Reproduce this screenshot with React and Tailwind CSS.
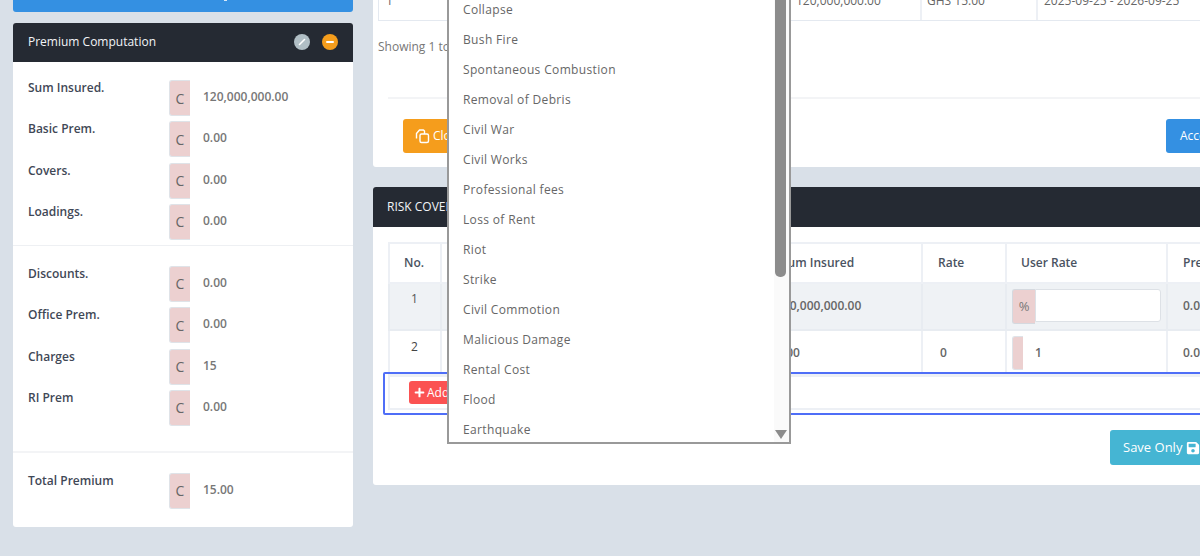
import React from "react";
import { FaPlus, FaSave } from "react-icons/fa";

const topRows = [
  { label: "Sum Insured.", value: "120,000,000.00" },
  { label: "Basic Prem.", value: "0.00" },
  { label: "Covers.", value: "0.00" },
  { label: "Loadings.", value: "0.00" },
];

const midRows = [
  { label: "Discounts.", value: "0.00" },
  { label: "Office Prem.", value: "0.00" },
  { label: "Charges", value: "15" },
  { label: "RI Prem", value: "0.00" },
];

const perils = [
  "Collapse",
  "Bush Fire",
  "Spontaneous Combustion",
  "Removal of Debris",
  "Civil War",
  "Civil Works",
  "Professional fees",
  "Loss of Rent",
  "Riot",
  "Strike",
  "Civil Commotion",
  "Malicious Damage",
  "Rental Cost",
  "Flood",
  "Earthquake",
];

const PremRow = ({ label, value }) => (
  <div className="flex h-[36px] mb-[5.33px] last:mb-0">
    <div className="w-[156px] pl-[15px] font-semibold text-[#3f4856] leading-4">{label}</div>
    <div className="w-[21px] h-[36px] bg-[#ecd0d0] border border-r-0 border-[#dfe3e8] rounded-l-[3px] flex items-center justify-center text-[#666] text-[14px]">
      C
    </div>
    <div className="pl-[13px] pt-[9px] leading-4 font-semibold text-[#777]">{value}</div>
  </div>
);

const CloneIcon = () => (
  <svg width="15" height="15" viewBox="0 0 15 15" fill="none" stroke="#fff" strokeWidth="1.4" strokeLinejoin="round">
    <path d="M1.5 9.5V4.5L4.5 1H8.5L9.5 2V5" />
    <rect x="5" y="5" width="8.5" height="8.5" rx="1.5" />
  </svg>
);

const Dropdown = () => (
  <div className="absolute left-[447px] top-[-5px] w-[344px] h-[449px] bg-white border-x-2 border-b-2 border-[#999] overflow-hidden">
    {perils.map((p) => (
      <div key={p} className="h-[30px] pl-[14px] flex items-center text-[#666] tracking-[0.35px]">
        {p}
      </div>
    ))}
    {/* scrollbar */}
    <div className="absolute right-0 top-0 bottom-0 w-[15px] bg-[#fafafa]">
      <div className="ml-[1px] w-[11px] h-[282px] bg-[#8c8c8c] rounded-b-[5px]" />
      <svg className="absolute left-[1px] bottom-[3px]" width="12" height="9" viewBox="0 0 12 9">
        <path d="M0 0H12L6 9Z" fill="#8c8c8c" />
      </svg>
    </div>
  </div>
);

const App = () => {
  return (
    <div
      className="relative w-[1200px] h-[556px] overflow-hidden bg-[#d9e0e8] flex items-start text-[12px]"
      style={{ fontFamily: '"Open Sans", "Noto Sans", sans-serif' }}
    >
      {/* left column */}
      <div className="ml-[13px] w-[340px] shrink-0">
        <div className="-mt-[28px] h-[40px] bg-[#3490e2] rounded-[3px] flex justify-center items-end">
          {/* descender of the cut off button label */}
          <span className="ml-[84px] mb-[11px] w-[3px] h-px bg-white/80" />
        </div>
        <div className="mt-[11px] bg-white rounded-[3px] h-[504px]">
          <div className="h-[39px] bg-[#252a33] rounded-t-[3px] flex items-center px-[15px] pb-px text-[#f2f4f7]">
            <span className="flex-1">Premium Computation</span>
            <span className="w-[16px] h-[16px] rounded-full bg-[#b0bec5] flex items-center justify-center mr-[12px]">
              <svg width="10" height="10" viewBox="0 0 10 10">
                <path d="M2.5 7.5L7.5 2.5" stroke="#fff" strokeWidth="1.6" strokeLinecap="round" />
              </svg>
            </span>
            <span className="w-[16px] h-[16px] rounded-full bg-[#f59d1c] flex items-center justify-center">
              <span className="w-[8px] h-[2px] bg-white rounded-full" />
            </span>
          </div>
          <div className="pt-[18px] pb-[5px] border-b border-[#eef0f3]">
            {topRows.map((r) => <PremRow key={r.label} {...r} />)}
          </div>
          <div className="pt-[20px] pb-[25px] border-b-2 border-[#f3f4f6]">
            {midRows.map((r) => <PremRow key={r.label} {...r} />)}
          </div>
          <div className="pt-[20px]">
            <PremRow label="Total Premium" value="15.00" />
          </div>
        </div>
      </div>

      {/* right column */}
      <div className="ml-[20px] w-[1000px] shrink-0">
        <div className="-mt-[40px] h-[207px] bg-white rounded-b-[3px] flex flex-col">
          <div className="ml-[5px] mt-[20px] h-[41px] border-x border-b border-[#e4e9f0] flex text-[#666]">
            <div className="w-[417px] pl-[7px] pt-[12px]">1</div>
            <div className="w-[126px] pt-[12px] border-r-2 border-[#edf0f5]">120,000,000.00</div>
            <div className="w-[116px] pl-[5px] pt-[12px] border-r-2 border-[#edf0f5]">GHS 15.00</div>
            <div className="pl-[6px] pt-[12px]">2025-09-25 - 2026-09-25</div>
          </div>
          <div className="ml-[5px] mt-[17px] text-[#777] leading-[18px]">Showing 1 to 1 of 1 entries</div>
          <div className="ml-[15px] mt-[41px] border-t-2 border-[#f3f4f6]" />
          <div className="mt-[20px] ml-[30px] flex">
            <button className="h-[34px] px-[12px] bg-[#f59d1c] rounded-[3px] text-white flex items-center gap-[3px]">
              <CloneIcon /> Clone
            </button>
            <button className="ml-auto h-[34px] w-[207px] px-[14px] bg-[#3490e2] rounded-[3px] text-white text-left">
              Accept
            </button>
          </div>
        </div>

        <div className="mt-[20px] h-[298px] bg-white rounded-[3px]">
          <div className="h-[40px] bg-[#252a33] rounded-t-[3px] flex items-center pl-[14px] text-[#f2f4f7]">
            RISK COVERS
          </div>
          <div className="relative pt-[15px]">
            <table className="ml-[15px] w-[900px] table-fixed border-collapse">
              <colgroup>
                <col className="w-[52px]" />
                <col className="w-[314px]" />
                <col className="w-[167px]" />
                <col className="w-[84px]" />
                <col className="w-[161px]" />
                <col />
              </colgroup>
              <thead>
                <tr className="h-[40px] text-[#4a5361] font-semibold">
                  <th className="border-2 border-[#edf0f5] text-left font-semibold pl-[14px]">No.</th>
                  <th className="border-2 border-[#edf0f5]" />
                  <th className="border-2 border-[#edf0f5] text-left font-semibold pl-[25px]">Sum Insured</th>
                  <th className="border-2 border-[#edf0f5] text-left font-semibold pl-[15px]">Rate</th>
                  <th className="border-2 border-[#edf0f5] text-left font-semibold pl-[14px]">User Rate</th>
                  <th className="border-2 border-[#edf0f5] text-left font-semibold pl-[15px]">Premium</th>
                </tr>
              </thead>
              <tbody>
                <tr className="h-[47px] bg-[#eff2f5] text-[#666]">
                  <td className="border-2 border-[#e8ecf1] align-top pt-[6px] pl-[21px] text-[#555]">1</td>
                  <td className="border-2 border-[#e8ecf1]" />
                  <td className="border-2 border-[#e8ecf1] pl-[20px] pb-px font-semibold">120,000,000.00</td>
                  <td className="border-2 border-[#e8ecf1]" />
                  <td className="border-2 border-[#e8ecf1] px-[5px] align-top pt-[5px]">
                    <div className="flex h-[35px]">
                      <div className="w-[23px] bg-[#ecd0d0] border border-r-0 border-[#d5d9df] rounded-l-[3px] flex items-center justify-center text-[#777] text-[13px]">%</div>
                      <div className="flex-1 h-[33px] bg-white border border-[#dde1e6] rounded-r-[3px]" />
                    </div>
                  </td>
                  <td className="border-2 border-[#e8ecf1] pl-[15px] pb-px font-semibold">0.00</td>
                </tr>
                <tr className="h-[45px] text-[#666]">
                  <td className="border-2 border-[#edf0f5] align-top pt-[7px] pl-[21px] text-[#444]">2</td>
                  <td className="border-2 border-[#edf0f5]" />
                  <td className="border-2 border-[#edf0f5] pl-[20px] font-semibold">0.00</td>
                  <td className="border-2 border-[#edf0f5] pl-[17px] font-semibold">0</td>
                  <td className="border-2 border-[#edf0f5] px-[5px]">
                    <div className="flex h-[34px] items-center">
                      <div className="w-[11px] h-[34px] bg-[#ecd0d0] border border-r-0 border-[#dfe3e8] rounded-l-[3px]" />
                      <span className="pl-[12px] font-semibold">1</span>
                    </div>
                  </td>
                  <td className="border-2 border-[#edf0f5] pl-[15px] font-semibold">0.00</td>
                </tr>
              </tbody>
            </table>
            {/* focused row overlapping the bottom of the table */}
            <div className="relative -mt-[4px] ml-[10px] w-[900px] h-[43px] border-2 border-[#4f6ef7] rounded-[2px] px-[3px] pt-px pb-[3px]">
              <div className="h-full border-2 border-[#edf0f5] pl-[19px] pt-[4px]">
                <button className="h-[23px] w-[60px] pl-[5px] bg-[#fb5252] rounded-[3px] text-white flex items-center gap-[2px]">
                  <FaPlus size={11} /> Add
                </button>
              </div>
            </div>
            <div className="mt-[15px] ml-[737px]">
              <button className="h-[35px] px-[13px] bg-[#45b5d3] rounded-[3px] text-white text-[13px] flex items-center gap-[4px]">
                Save Only <FaSave size={14} />
              </button>
            </div>
          </div>
        </div>
      </div>

      <Dropdown />
    </div>
  );
};

export default App;
